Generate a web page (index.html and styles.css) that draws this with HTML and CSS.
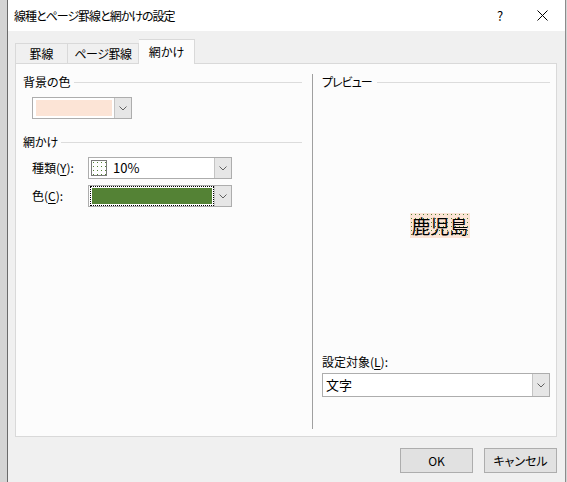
FILE: index.html
```html
<!DOCTYPE html>
<html>
	<head>
		<meta charset="UTF-8">
		<title>線種とページ罫線と網かけの設定</title>
		<link rel="stylesheet" href="styles.css">
	</head>
	<body>
		<div class="dialog">
			<div class="titlebar">
				<span class="title">線種とページ罫線と網かけの設定</span>
				<span class="help">?</span>
				<span class="close">
					<svg width="11" height="11" viewBox="0 0 11 11"><path d="M0.5 0.5 L10.5 10.5 M10.5 0.5 L0.5 10.5" stroke="#000" stroke-width="1" fill="none"/></svg>
				</span>
			</div>
			<div class="body">
				<div class="tabs">
					<div class="tab tab-1">罫線</div>
					<div class="tab tab-2">ページ罫線</div>
					<div class="tab tab-3 active">網かけ</div>
				</div>
				<div class="panel">
					<div class="left">
						<div class="group-head">背景の色</div>
						<div class="combo combo-bg">
							<div class="combo-value"><span class="swatch"></span></div>
							<div class="combo-btn"><svg width="8" height="5" viewBox="0 0 8 5"><path d="M0.5 0.5 L4 4 L7.5 0.5" stroke="#606060" fill="none"/></svg></div>
						</div>
						<div class="group-head group-2">網かけ</div>
						<div class="row row-1">
							<span class="row-label">種類(<u>Y</u>):</span>
							<div class="combo combo-wide">
								<div class="combo-value"><span class="pattern"></span><span class="pattern-text">10%</span></div>
								<div class="combo-btn"><svg width="8" height="5" viewBox="0 0 8 5"><path d="M0.5 0.5 L4 4 L7.5 0.5" stroke="#606060" fill="none"/></svg></div>
							</div>
						</div>
						<div class="row row-2">
							<span class="row-label">色(<u>C</u>):</span>
							<div class="combo combo-wide">
								<div class="combo-value"><span class="focus"><span class="green"></span></span></div>
								<div class="combo-btn"><svg width="8" height="5" viewBox="0 0 8 5"><path d="M0.5 0.5 L4 4 L7.5 0.5" stroke="#606060" fill="none"/></svg></div>
							</div>
						</div>
					</div>
					<div class="right">
						<div class="group-head head-preview">プレビュー</div>
						<div class="preview">
							<span class="sample">鹿児島</span>
						</div>
						<div class="target-label">設定対象(<u>L</u>):</div>
						<div class="combo combo-target">
							<div class="combo-value"><span class="target-text">文字</span></div>
							<div class="combo-btn"><svg width="8" height="5" viewBox="0 0 8 5"><path d="M0.5 0.5 L4 4 L7.5 0.5" stroke="#606060" fill="none"/></svg></div>
						</div>
					</div>
				</div>
				<div class="buttons">
					<button class="btn">OK</button>
					<button class="btn">キャンセル</button>
				</div>
			</div>
		</div>
	</body>
</html>
```

FILE: styles.css
```css
body {
	margin: 0;
	padding: 0;
	background: #d4d4d4;
	font-family: "Noto Sans CJK JP", "Noto Sans", sans-serif;
	font-size: 12px;
	font-feature-settings: "palt";
	color: #000;
}
u {
	text-decoration: underline;
	text-underline-offset: 2px;
}
.dialog {
	margin-left: 7px;
	width: 559px;
	height: 482px;
	box-sizing: border-box;
	border-left: 1px solid #6a6a6a;
	border-right: 1px solid #8c8c8c;
	background: #f0f0f0;
	display: flex;
	flex-direction: column;
}
.titlebar {
	height: 31px;
	background: #fff;
	display: flex;
	align-items: center;
	padding-left: 6px;
}
.title {
	flex: 1;
	line-height: 16px;
	letter-spacing: -1px;
}
.help {
	width: 46px;
	margin-right: -4px;
	text-align: center;
	line-height: 16px;
	font-size: 13px;
}
.close {
	width: 46px;
	height: 31px;
	display: flex;
	align-items: center;
	justify-content: center;
}
.body {
	flex: 1;
	padding: 8px 0 0 7px;
}
.tabs {
	display: flex;
	align-items: flex-end;
	height: 24px;
}
.tab {
	height: 20px;
	box-sizing: border-box;
	border: 1px solid #d9d9d9;
	border-bottom: none;
	background: #f0f0f0;
	display: flex;
	align-items: center;
	justify-content: center;
	line-height: 16px;
}
.tab-1 {
	width: 53px;
}
.tab-2 {
	width: 71px;
	border-left: none;
	letter-spacing: -0.5px;
}
.tab-3 {
	width: 56px;
}
.tab.active {
	height: 25px;
	margin-bottom: -1px;
	background: #fcfcfc;
	position: relative;
	z-index: 1;
	border-left: none;
}
.panel {
	width: 542px;
	height: 374px;
	box-sizing: border-box;
	border: 1px solid #d9d9d9;
	background: #fcfcfc;
	display: flex;
}
.left {
	width: 290px;
	box-sizing: border-box;
	padding: 10px 4px 0 7px;
}
.group-head {
	display: flex;
	align-items: center;
	gap: 3px;
	height: 16px;
	line-height: 16px;
}
.group-head::after {
	content: "";
	flex: 1;
	height: 1px;
	background: #dcdcdc;
}
.head-preview {
	letter-spacing: -1px;
	gap: 5px;
}
.group-2 {
	margin-top: 15px;
}
.combo {
	display: flex;
	height: 22px;
	box-sizing: border-box;
	border: 1px solid #adadad;
	background: #fff;
}
.combo-value {
	flex: 1;
	display: flex;
	align-items: center;
}
.combo-btn {
	width: 17px;
	box-sizing: border-box;
	border-left: 1px solid #c4c4c4;
	background: #e6e6e6;
	display: flex;
	align-items: center;
	justify-content: center;
}
.combo-bg {
	width: 100px;
	margin: 7px 0 0 9px;
}
.swatch {
	flex: 1;
	height: 16px;
	margin: 0 2px 0 3px;
	background: #fce4d6;
}
.row {
	display: flex;
	align-items: center;
	padding-left: 9px;
}
.row-1 {
	margin-top: 7px;
}
.row-2 {
	margin-top: 6px;
}
.row-label {
	width: 56px;
	line-height: 16px;
}
.combo-wide {
	width: 144px;
}
.pattern {
	width: 16px;
	height: 16px;
	box-sizing: border-box;
	margin-left: 2px;
	border: 1px solid #7a7a7a;
	background-color: #fff;
	background-image: radial-gradient(circle at 1.5px 1.5px, #548235 0.7px, transparent 0.9px);
	background-size: 4px 4px;
}
.pattern-text {
	margin-left: 6px;
	font-size: 13px;
	line-height: 16px;
}
.focus {
	flex: 1;
	height: 20px;
	box-sizing: border-box;
	margin-left: 1px;
	border: 1px dotted #000;
	padding: 1px;
	display: flex;
}
.green {
	flex: 1;
	background: #548235;
}
.right {
	flex: 1;
	margin: 10px 6px 7px 6px;
	border-left: 1px solid #a0a0a0;
	padding: 0 0 32px 9px;
	display: flex;
	flex-direction: column;
}
.preview {
	flex: 1;
	display: flex;
	align-items: center;
	justify-content: center;
	padding: 7px 0 0 8px;
}
.sample {
	font-size: 19px;
	line-height: 25px;
	padding: 0 1px;
	background-color: #fce4d6;
	background-image: radial-gradient(circle at 1.5px 1.5px, #548235 0.7px, transparent 0.9px);
	background-size: 4px 4px;
}
.target-label {
	line-height: 16px;
}
.combo-target {
	margin-top: 3px;
	height: 24px;
}
.target-text {
	margin-left: 3px;
	font-size: 13px;
	line-height: 16px;
}
.buttons {
	width: 542px;
	margin-top: 11px;
	display: flex;
	justify-content: flex-end;
	gap: 11px;
}
.btn {
	width: 73px;
	height: 25px;
	box-sizing: border-box;
	border: 1px solid #adadad;
	background: #e1e1e1;
	font-family: inherit;
	font-size: 12px;
	font-feature-settings: "palt";
	color: #000;
	padding: 0;
}
```
